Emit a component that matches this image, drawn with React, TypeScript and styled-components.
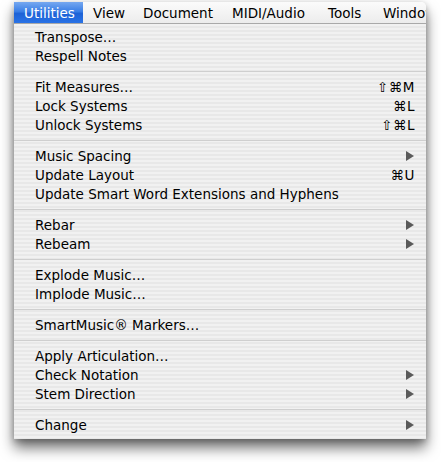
import React from "react";
import styled, { createGlobalStyle } from "styled-components";

const Global = createGlobalStyle`
  html, body { margin: 0; padding: 0; background: #ffffff; }
  body { font-family: "DejaVu Sans", "Liberation Sans", sans-serif; }
`;

const Stage = styled.div`
  width: 441px;
  height: 462px;
  padding: 2px 0 0 14px;
  box-sizing: border-box;
`;

const Wrapper = styled.div`
  width: 412px;
  box-shadow: 0 9px 14px rgba(0, 0, 0, 0.55), 0 2px 6px rgba(0, 0, 0, 0.25);
  border-top-right-radius: 5px;
`;

const MenuBar = styled.div`
  height: 21px;
  display: flex;
  align-items: stretch;
  background: linear-gradient(#fbfbfb, #ececec);
  border-bottom: 1px solid #a9a9a9;
  border-top-right-radius: 5px;
  overflow: hidden;
  white-space: nowrap;
`;

const BarItem = styled.div<{ $active?: boolean; $w: number }>`
  flex: 0 0 ${(p) => p.$w}px;
  display: flex;
  align-items: center;
  padding-left: 10px;
  box-sizing: border-box;
  font-size: 13.5px;
  color: ${(p) => (p.$active ? "#ffffff" : "#000000")};
  background: ${(p) =>
    p.$active ? "linear-gradient(#76a8f0 0%, #3b7fe6 45%, #1d62d6 55%, #2a73e6 100%)" : "transparent"};
`;

const Menu = styled.div`
  padding: 3px 0 5px;
  background: repeating-linear-gradient(
    to bottom,
    #f1f1f1 0px,
    #f1f1f1 2px,
    #e8e8e8 2px,
    #e8e8e8 4px
  );
`;

const Row = styled.div`
  height: 19px;
  display: flex;
  align-items: center;
  padding: 0 11px 0 21px;
  font-size: 13.5px;
  color: #000;
  white-space: nowrap;
`;

const Label = styled.span`
  flex: 1;
`;

const Shortcut = styled.span`
  font-size: 13.5px;
  letter-spacing: 0.5px;
`;

const Arrow = styled.span`
  width: 0;
  height: 0;
  margin-right: 1px;
  border-top: 5px solid transparent;
  border-bottom: 5px solid transparent;
  border-left: 8px solid #5a5a5a;
`;

const Separator = styled.div`
  height: 12px;
  display: flex;
  align-items: center;
  &::after {
    content: "";
    flex: 1;
    height: 1px;
    background: #cfcfcf;
  }
`;

type Item =
  | { sep: true }
  | { label: string; key?: string; sub?: boolean; sep?: false };

const items: Item[] = [
  { label: "Transpose…" },
  { label: "Respell Notes" },
  { sep: true },
  { label: "Fit Measures…", key: "⇧⌘M" },
  { label: "Lock Systems", key: "⌘L" },
  { label: "Unlock Systems", key: "⇧⌘L" },
  { sep: true },
  { label: "Music Spacing", sub: true },
  { label: "Update Layout", key: "⌘U" },
  { label: "Update Smart Word Extensions and Hyphens" },
  { sep: true },
  { label: "Rebar", sub: true },
  { label: "Rebeam", sub: true },
  { sep: true },
  { label: "Explode Music…" },
  { label: "Implode Music…" },
  { sep: true },
  { label: "SmartMusic® Markers…" },
  { sep: true },
  { label: "Apply Articulation…" },
  { label: "Check Notation", sub: true },
  { label: "Stem Direction", sub: true },
  { sep: true },
  { label: "Change", sub: true },
];

const bar = [
  { t: "Utilities", w: 69, a: true },
  { t: "View", w: 50 },
  { t: "Document", w: 89 },
  { t: "MIDI/Audio", w: 96 },
  { t: "Tools", w: 55 },
  { t: "Window", w: 80 },
];

export default function App() {
  return (
    <Stage>
      <Global />
      <Wrapper>
        <MenuBar>
          {bar.map((b) => (
            <BarItem key={b.t} $active={b.a} $w={b.w}>
              {b.t}
            </BarItem>
          ))}
        </MenuBar>
        <Menu>
          {items.map((it, i) =>
            it.sep ? (
              <Separator key={i} />
            ) : (
              <Row key={i}>
                <Label>{it.label}</Label>
                {it.key && <Shortcut>{it.key}</Shortcut>}
                {it.sub && <Arrow />}
              </Row>
            )
          )}
        </Menu>
      </Wrapper>
    </Stage>
  );
}
